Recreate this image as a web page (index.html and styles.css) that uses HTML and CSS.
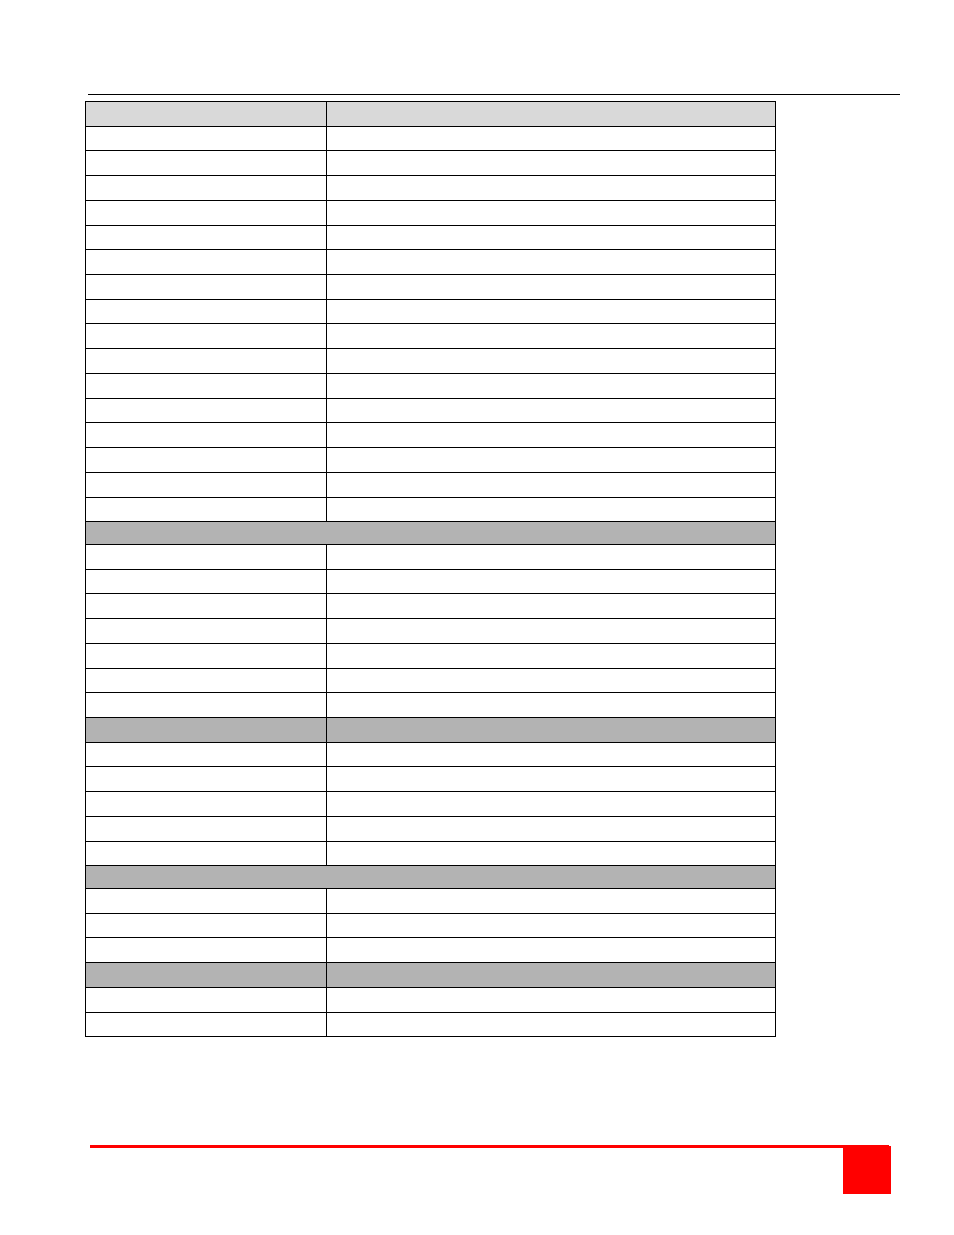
FILE: index.html
```html
<!DOCTYPE html>
<html>
<head>
<meta charset="utf-8">
<link rel="stylesheet" href="styles.css">
</head>
<body>
<div class="page">
  <div class="top-rule"></div>
  <table class="spec">
    <tr class="head"><td class="c1"></td><td class="c2"></td></tr>
    <tr><td></td><td></td></tr>
    <tr><td></td><td></td></tr>
    <tr><td></td><td></td></tr>
    <tr><td></td><td></td></tr>
    <tr><td></td><td></td></tr>
    <tr><td></td><td></td></tr>
    <tr><td></td><td></td></tr>
    <tr><td></td><td></td></tr>
    <tr><td></td><td></td></tr>
    <tr><td></td><td></td></tr>
    <tr><td></td><td></td></tr>
    <tr><td></td><td></td></tr>
    <tr><td></td><td></td></tr>
    <tr><td></td><td></td></tr>
    <tr><td></td><td></td></tr>
    <tr><td></td><td></td></tr>
    <tr class="section"><td colspan="2"></td></tr>
    <tr><td></td><td></td></tr>
    <tr><td></td><td></td></tr>
    <tr><td></td><td></td></tr>
    <tr><td></td><td></td></tr>
    <tr><td></td><td></td></tr>
    <tr><td></td><td></td></tr>
    <tr><td></td><td></td></tr>
    <tr class="subhead"><td></td><td></td></tr>
    <tr><td></td><td></td></tr>
    <tr><td></td><td></td></tr>
    <tr><td></td><td></td></tr>
    <tr><td></td><td></td></tr>
    <tr><td></td><td></td></tr>
    <tr class="section"><td colspan="2"></td></tr>
    <tr><td></td><td></td></tr>
    <tr><td></td><td></td></tr>
    <tr><td></td><td></td></tr>
    <tr class="subhead"><td></td><td></td></tr>
    <tr><td></td><td></td></tr>
    <tr><td></td><td></td></tr>
  </table>
  <div class="footer">
    <div class="red-rule"></div>
    <div class="page-box"></div>
  </div>
</div>
</body>
</html>
```
FILE: styles.css
```css
html, body {
  margin: 0;
  padding: 0;
  background: #ffffff;
  font-family: "Liberation Sans", Arial, sans-serif;
}
.page {
  width: 954px;
  height: 1235px;
  padding-top: 94px;
  box-sizing: border-box;
}
.top-rule {
  margin-left: 88px;
  width: 812px;
  height: 1px;
  background: #000;
}
.spec {
  margin-top: 6px;
  margin-left: 85px;
  border-collapse: collapse;
  width: 691px;
  table-layout: fixed;
}
.spec td {
  border: 1px solid #000;
  padding: 0;
  height: 23.72px;
}
.spec .c1 { width: 240px; }
.spec tr.head td { background: #d9d9d9; }
.spec tr.section td { background: #b3b3b3; height: 21.7px; }
.spec tr.subhead td { background: #b3b3b3; }
.footer {
  margin-top: 108px;
  margin-left: 90px;
  width: 801px;
  display: flex;
  flex-direction: column;
}
.red-rule {
  width: 799px;
  height: 3px;
  background: #ff0000;
}
.page-box {
  align-self: flex-end;
  width: 48px;
  height: 48px;
  margin-top: -2px;
  background: #ff0000;
}
```
